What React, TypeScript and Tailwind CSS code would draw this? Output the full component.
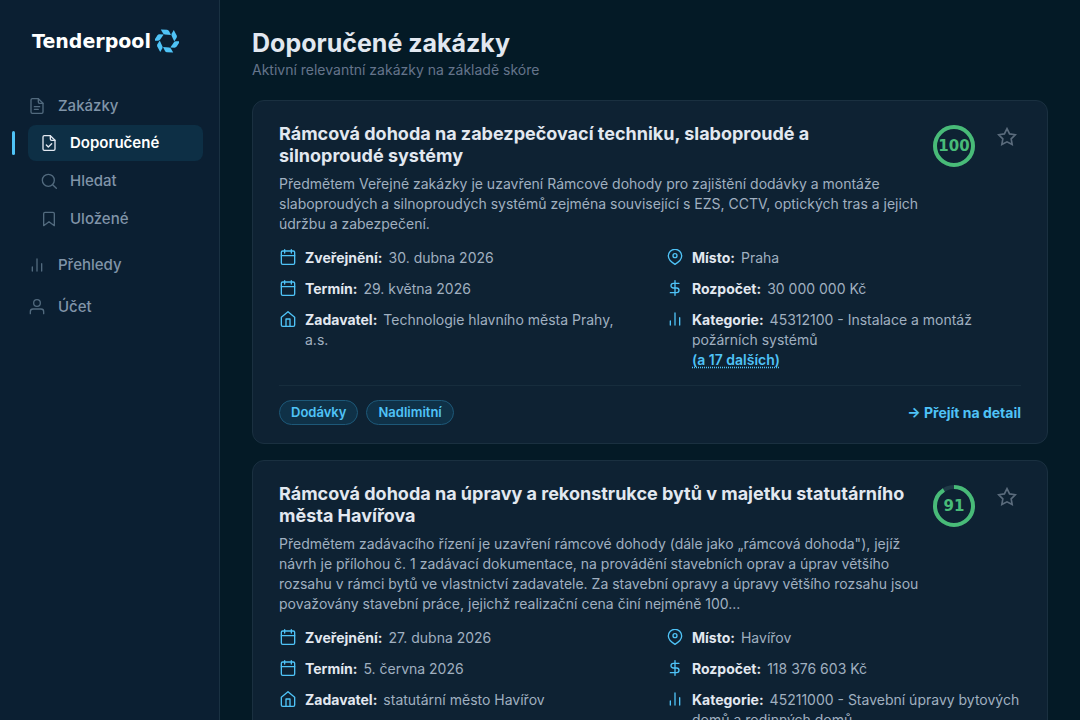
import { useState } from 'react';
import type { ReactNode } from 'react';

type IconName =
  | 'file'
  | 'fileCheck'
  | 'search'
  | 'bookmark'
  | 'bars'
  | 'user'
  | 'calendar'
  | 'home'
  | 'pin'
  | 'dollar';

const ICONS: Record<IconName, ReactNode> = {
  file: (
    <>
      <path d="M14 1v5a2 2 0 0 0 2 2h5" />
      <path d="M19 23H5a2 2 0 0 1-2-2V3a2 2 0 0 1 2-2h9l7 7v13a2 2 0 0 1-2 2z" />
      <path d="M8 17h6" />
      <path d="M8 13h8" />
    </>
  ),
  fileCheck: (
    <>
      <path d="M14 1v5a2 2 0 0 0 2 2h5" />
      <path d="M19 23H5a2 2 0 0 1-2-2V3a2 2 0 0 1 2-2h9l7 7v13a2 2 0 0 1-2 2z" />
      <path d="M8 15l3 3 5-5" />
    </>
  ),
  search: (
    <>
      <circle cx="11" cy="11" r="9" />
      <path d="M23 23l-5.5-5.5" />
    </>
  ),
  bookmark: <path d="M20 22l-8-6-8 6V4a2 2 0 0 1 2-2h12a2 2 0 0 1 2 2z" />,
  bars: (
    <>
      <path d="M12 21V3" />
      <path d="M19 21V10" />
      <path d="M5 21v-6" />
    </>
  ),
  user: (
    <>
      <path d="M22 22v-3a4 4 0 0 0-4-4H6a4 4 0 0 0-4 4v3" />
      <circle cx="12" cy="6" r="5" />
    </>
  ),
  calendar: (
    <>
      <rect x="2" y="3" width="20" height="20" rx="2" />
      <path d="M17 1v5" />
      <path d="M7 1v5" />
      <path d="M2 10h20" />
    </>
  ),
  home: (
    <>
      <path d="M2 9.5L12 1l10 8.5V21a2 2 0 0 1-2 2H4a2 2 0 0 1-2-2z" />
      <path d="M9 23V12h6v11" />
    </>
  ),
  pin: (
    <>
      <path d="M22 10.5C22 17 12 23 12 23S2 17 2 10.5a10 10 0 0 1 20 0z" />
      <circle cx="12" cy="10" r="3" />
    </>
  ),
  dollar: (
    <>
      <path d="M12 1v22" />
      <path d="M18 5H9.5a3.5 3.5 0 0 0 0 7h5a3.5 3.5 0 0 1 0 7H5" />
    </>
  ),
};

function Icon({ name, className }: { name: IconName; className?: string }) {
  return (
    <svg
      viewBox="0 0 24 24"
      fill="none"
      stroke="currentColor"
      strokeWidth="2"
      strokeLinecap="round"
      strokeLinejoin="round"
      aria-hidden="true"
      className={className}
    >
      {ICONS[name]}
    </svg>
  );
}

interface Tender {
  title: string;
  description: string;
  score: number;
  published: string;
  deadline: string;
  buyer: string;
  place: string;
  budget: string;
  category: string;
  more: number;
  tags: string[];
}

const TENDERS: Tender[] = [
  {
    title: 'Rámcová dohoda na zabezpečovací techniku, slaboproudé a\nsilnoproudé systémy',
    description:
      'Předmětem Veřejné zakázky je uzavření Rámcové dohody pro zajištění dodávky a montáže\nslaboproudých a silnoproudých systémů zejména související s EZS, CCTV, optických tras a jejich\núdržbu a zabezpečení.',
    score: 100,
    published: '30. dubna 2026',
    deadline: '29. května 2026',
    buyer: 'Technologie hlavního města Prahy,\na.s.',
    place: 'Praha',
    budget: '30 000 000 Kč',
    category: '45312100 - Instalace a montáž\npožárních systémů',
    more: 17,
    tags: ['Dodávky', 'Nadlimitní'],
  },
  {
    title: 'Rámcová dohoda na úpravy a rekonstrukce bytů v majetku statutárního\nměsta Havířova',
    description:
      'Předmětem zadávacího řízení je uzavření rámcové dohody (dále jako „rámcová dohoda"), jejíž\nnávrh je přílohou č. 1 zadávací dokumentace, na provádění stavebních oprav a úprav většího\nrozsahu v rámci bytů ve vlastnictví zadavatele. Za stavební opravy a úpravy většího rozsahu jsou\npovažovány stavební práce, jejichž realizační cena činí nejméně 100...',
    score: 91,
    published: '27. dubna 2026',
    deadline: '5. června 2026',
    buyer: 'statutární město Havířov',
    place: 'Havířov',
    budget: '118 376 603 Kč',
    category: '45211000 - Stavební úpravy bytových\ndomů a rodinných domů',
    more: 3,
    tags: ['Stavební práce', 'Nadlimitní'],
  },
];

function Logo() {
  return (
    <a href="#" className="flex items-center gap-1 px-8">
      <span className="font-['DejaVu_Sans',sans-serif] text-[19px]/6 font-bold text-white">
        Tenderpool
      </span>
      <svg viewBox="0 0 24 24" className="size-6 shrink-0 fill-[#4fc3f7]" aria-hidden="true">
        {[0, 60, 120, 180, 240, 300].map((angle) => (
          <path
            key={angle}
            d="M5.8.6l6.2.2q1.400.2 2 1.300l2 3.800-6.200-.5q-1.300-.2-2-1.300z"
            transform={`rotate(${angle} 12 12)`}
          />
        ))}
      </svg>
    </a>
  );
}

function NavItem({
  icon,
  label,
  nested,
  active,
}: {
  icon: IconName;
  label: string;
  nested?: boolean;
  active?: boolean;
}) {
  return (
    <li className="relative pr-4">
      {active && <span className="absolute top-1.5 left-3 h-6 w-[3px] rounded-sm bg-[#4fc3f7]" />}
      <a
        href="#"
        aria-current={active ? 'page' : undefined}
        className={`flex h-9 items-center gap-3 rounded-lg text-[15px] font-medium ${
          nested ? 'ml-7 px-3' : 'px-7'
        } ${active ? 'bg-[#0d2f45] font-semibold text-white' : 'text-[#8094a8]'}`}
      >
        <span className="flex w-[18px] shrink-0 justify-center">
          <Icon name={icon} className={`size-4 ${active ? 'text-slate-200' : 'text-[#526a7e]'}`} />
        </span>
        {label}
      </a>
    </li>
  );
}

function Sidebar() {
  return (
    <aside className="w-[220px] shrink-0 border-r border-[#1a3142] bg-[#0b1f32] pt-[29px]">
      <Logo />
      <nav className="pt-[35px]">
        <ul>
          <NavItem icon="file" label="Zakázky" />
          <li>
            <ul className="flex flex-col gap-0.5 pt-px">
              <NavItem icon="fileCheck" label="Doporučené" nested active />
              <NavItem icon="search" label="Hledat" nested />
              <NavItem icon="bookmark" label="Uložené" nested />
            </ul>
          </li>
        </ul>
        <ul className="mt-2.5 flex flex-col gap-1.5">
          <NavItem icon="bars" label="Přehledy" />
          <NavItem icon="user" label="Účet" />
        </ul>
      </nav>
    </aside>
  );
}

function ScoreRing({ score }: { score: number }) {
  return (
    <div className="relative flex size-[42px] items-center justify-center">
      <svg viewBox="0 0 42 42" fill="none" className="absolute inset-0 -rotate-90" aria-hidden="true">
        <circle cx="21" cy="21" r="19" stroke="#1f3a47" strokeWidth="4" />
        <circle
          cx="21"
          cy="21"
          r="19"
          stroke="#48bb78"
          strokeWidth="4"
          pathLength="100"
          strokeDasharray={`${score} 100`}
        />
      </svg>
      <span className="relative font-['DejaVu_Sans',sans-serif] text-[15px]/5 font-bold text-[#48bb78]">
        {score}
      </span>
    </div>
  );
}

function Detail({
  icon,
  label,
  children,
}: {
  icon: IconName;
  label: string;
  children: ReactNode;
}) {
  return (
    <div className="flex gap-2">
      <span className="flex h-[18px] w-[18px] shrink-0 items-center justify-center text-[#4fc3f7]">
        <Icon name={icon} className="size-4" />
      </span>
      <p className="whitespace-pre-line text-[#a0b0c0]">
        <strong className="mr-1.5 font-bold text-slate-200">{label}:</strong>
        {children}
      </p>
    </div>
  );
}

function TenderCard({ tender }: { tender: Tender }) {
  const [saved, setSaved] = useState(false);

  return (
    <article className="rounded-xl border border-[#1a3040] bg-[#0e2233] px-[26px] pt-[22px] pb-[18px]">
      <div className="flex items-start">
        <div className="min-w-0 flex-1">
          <h2 className="text-lg/[22px] font-bold whitespace-pre-line text-slate-200">
            {tender.title}
          </h2>
          <p className="mt-[7px] text-sm/5 whitespace-pre-line text-[#a0b0c0]">
            {tender.description}
          </p>
        </div>
        <div className="flex shrink-0 items-start gap-[22px] pt-0.5">
          <ScoreRing score={tender.score} />
          <button
            type="button"
            aria-label="Uložit zakázku"
            aria-pressed={saved}
            onClick={() => setSaved(!saved)}
            className="mt-0.5 mr-1"
          >
            <svg
              viewBox="0 0 24 24"
              fill={saved ? 'currentColor' : 'none'}
              stroke="currentColor"
              strokeWidth="2"
              className="size-5 text-[#5a6b7c]"
            >
              <path d="M12 2l3.1 6.3 6.9 1-5 4.9 1.2 6.8-6.2-3.2L5.8 21 7 14.2 2 9.3l6.9-1z" />
            </svg>
          </button>
        </div>
      </div>

      <div className="mt-3.5 grid grid-cols-2 gap-x-8 gap-y-[11px] text-sm/5">
        <Detail icon="calendar" label="Zveřejnění">{tender.published}</Detail>
        <Detail icon="pin" label="Místo">{tender.place}</Detail>
        <Detail icon="calendar" label="Termín">{tender.deadline}</Detail>
        <Detail icon="dollar" label="Rozpočet">{tender.budget}</Detail>
        <Detail icon="home" label="Zadavatel">{tender.buyer}</Detail>
        <Detail icon="bars" label="Kategorie">
          {tender.category}
          <br />
          <button
            type="button"
            className="font-semibold text-[#4fc3f7] underline decoration-dotted underline-offset-2"
          >
            (a {tender.more} dalších)
          </button>
        </Detail>
      </div>

      <div className="mt-[15px] flex items-center justify-between border-t border-[#172d3d] pt-3.5">
        <ul className="flex gap-2">
          {tender.tags.map((tag) => (
            <li
              key={tag}
              className="rounded-full border border-[#1d5878] bg-[#0f3147] px-[11px] py-0.5 text-[13px]/[19px] font-semibold text-[#4fc3f7]"
            >
              {tag}
            </li>
          ))}
        </ul>
        <a href="#" className="text-sm/5 font-bold text-[#4fc3f7]">
          → Přejít na detail
        </a>
      </div>
    </article>
  );
}

export default function App() {
  return (
    <div className="flex h-screen overflow-hidden bg-[#041a26] font-[Inter,sans-serif]">
      <Sidebar />
      <main className="min-w-0 flex-1 overflow-hidden px-8 pt-[27px]">
        <header>
          <h1 className="text-[25px]/8 font-bold text-slate-200">Doporučené zakázky</h1>
          <p className="mt-px text-sm/5 text-[#64748b]">
            Aktivní relevantní zakázky na základě skóre
          </p>
        </header>
        <div className="mt-5 flex flex-col gap-4">
          {TENDERS.map((tender) => (
            <TenderCard key={tender.title} tender={tender} />
          ))}
        </div>
      </main>
    </div>
  );
}
